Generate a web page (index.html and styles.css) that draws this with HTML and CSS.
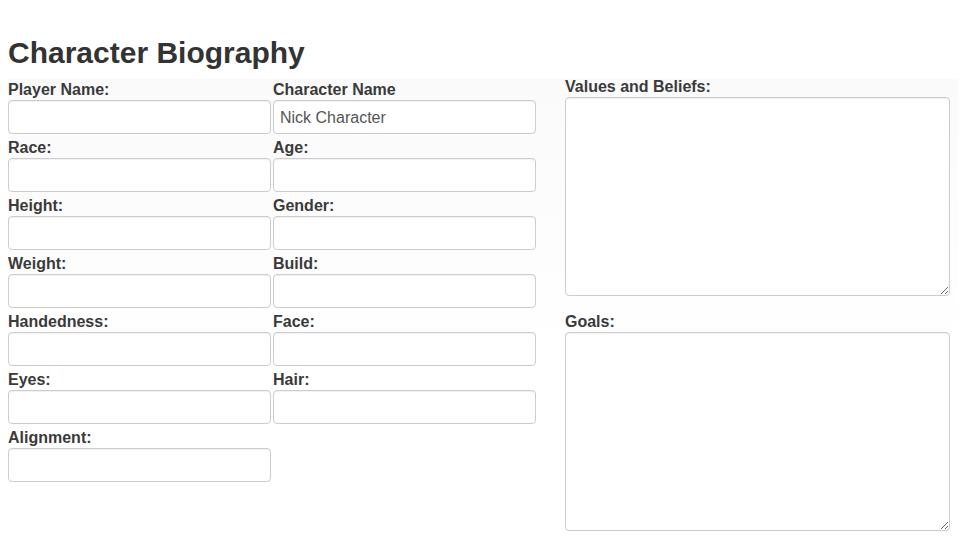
FILE: index.html
```html
<!DOCTYPE html>
<html>
<head>
<meta charset="utf-8">
<link rel="stylesheet" href="styles.css">
</head>
<body>
<h1 class="title">Character Biography</h1>
<div class="sheet">
  <div class="fields">
    <div class="field"><label class="lbl">Player Name:</label><input class="inp" type="text"></div>
    <div class="field"><label class="lbl">Character Name</label><input class="inp" type="text" value="Nick Character"></div>
    <div class="field"><label class="lbl">Race:</label><input class="inp" type="text"></div>
    <div class="field"><label class="lbl">Age:</label><input class="inp" type="text"></div>
    <div class="field"><label class="lbl">Height:</label><input class="inp" type="text"></div>
    <div class="field"><label class="lbl">Gender:</label><input class="inp" type="text"></div>
    <div class="field"><label class="lbl">Weight:</label><input class="inp" type="text"></div>
    <div class="field"><label class="lbl">Build:</label><input class="inp" type="text"></div>
    <div class="field"><label class="lbl">Handedness:</label><input class="inp" type="text"></div>
    <div class="field"><label class="lbl">Face:</label><input class="inp" type="text"></div>
    <div class="field"><label class="lbl">Eyes:</label><input class="inp" type="text"></div>
    <div class="field"><label class="lbl">Hair:</label><input class="inp" type="text"></div>
    <div class="field"><label class="lbl">Alignment:</label><input class="inp" type="text"></div>
  </div>
  <div class="notes">
    <div class="note"><label class="lbl">Values and Beliefs:</label><textarea class="area"></textarea></div>
    <div class="note"><label class="lbl">Goals:</label><textarea class="area"></textarea></div>
  </div>
</div>
</body>
</html>
```
FILE: styles.css
```css
html, body {
  background: #fff;
}
body {
  margin: 8px;
  font-family: "Liberation Sans", Arial, sans-serif;
  color: #333;
}
.title {
  margin: 28px 0 10px;
  font-size: 30px;
  line-height: 33px;
  font-weight: bold;
  color: #333;
}
.sheet {
  display: flex;
  align-items: flex-start;
  background: linear-gradient(#fafafa, #ffffff 60%);
  margin-right: -5px;
}
.fields {
  display: grid;
  grid-template-columns: 263px 263px;
  column-gap: 2px;
  width: 528px;
}
.field {
  display: flex;
  flex-direction: column;
  margin-bottom: 3px;
}
.lbl {
  display: block;
  font-size: 16px;
  line-height: 20px;
  font-weight: bold;
  color: #3a3a3a;
  padding-top: 1px;
}
.inp {
  box-sizing: border-box;
  width: 263px;
  height: 34px;
  margin: 0;
  padding: 2px 6px 0;
  border: 1px solid #ccc;
  border-radius: 4px;
  background: #fff;
  box-shadow: inset 0 1px 1px rgba(0,0,0,0.06);
  font-family: "Liberation Sans", Arial, sans-serif;
  font-size: 16px;
  color: #555;
  outline: none;
}
.notes {
  margin-left: 29px;
  margin-top: -3px;
  width: 385px;
  display: flex;
  flex-direction: column;
}
.note {
  display: flex;
  flex-direction: column;
  margin-bottom: 15px;
}
.area {
  box-sizing: border-box;
  width: 385px;
  height: 199px;
  margin: 0;
  padding: 6px;
  border: 1px solid #ccc;
  border-radius: 4px;
  background: #fff;
  box-shadow: inset 0 1px 1px rgba(0,0,0,0.06);
  font-family: "Liberation Sans", Arial, sans-serif;
  font-size: 16px;
  color: #555;
  outline: none;
  resize: both;
}
```
